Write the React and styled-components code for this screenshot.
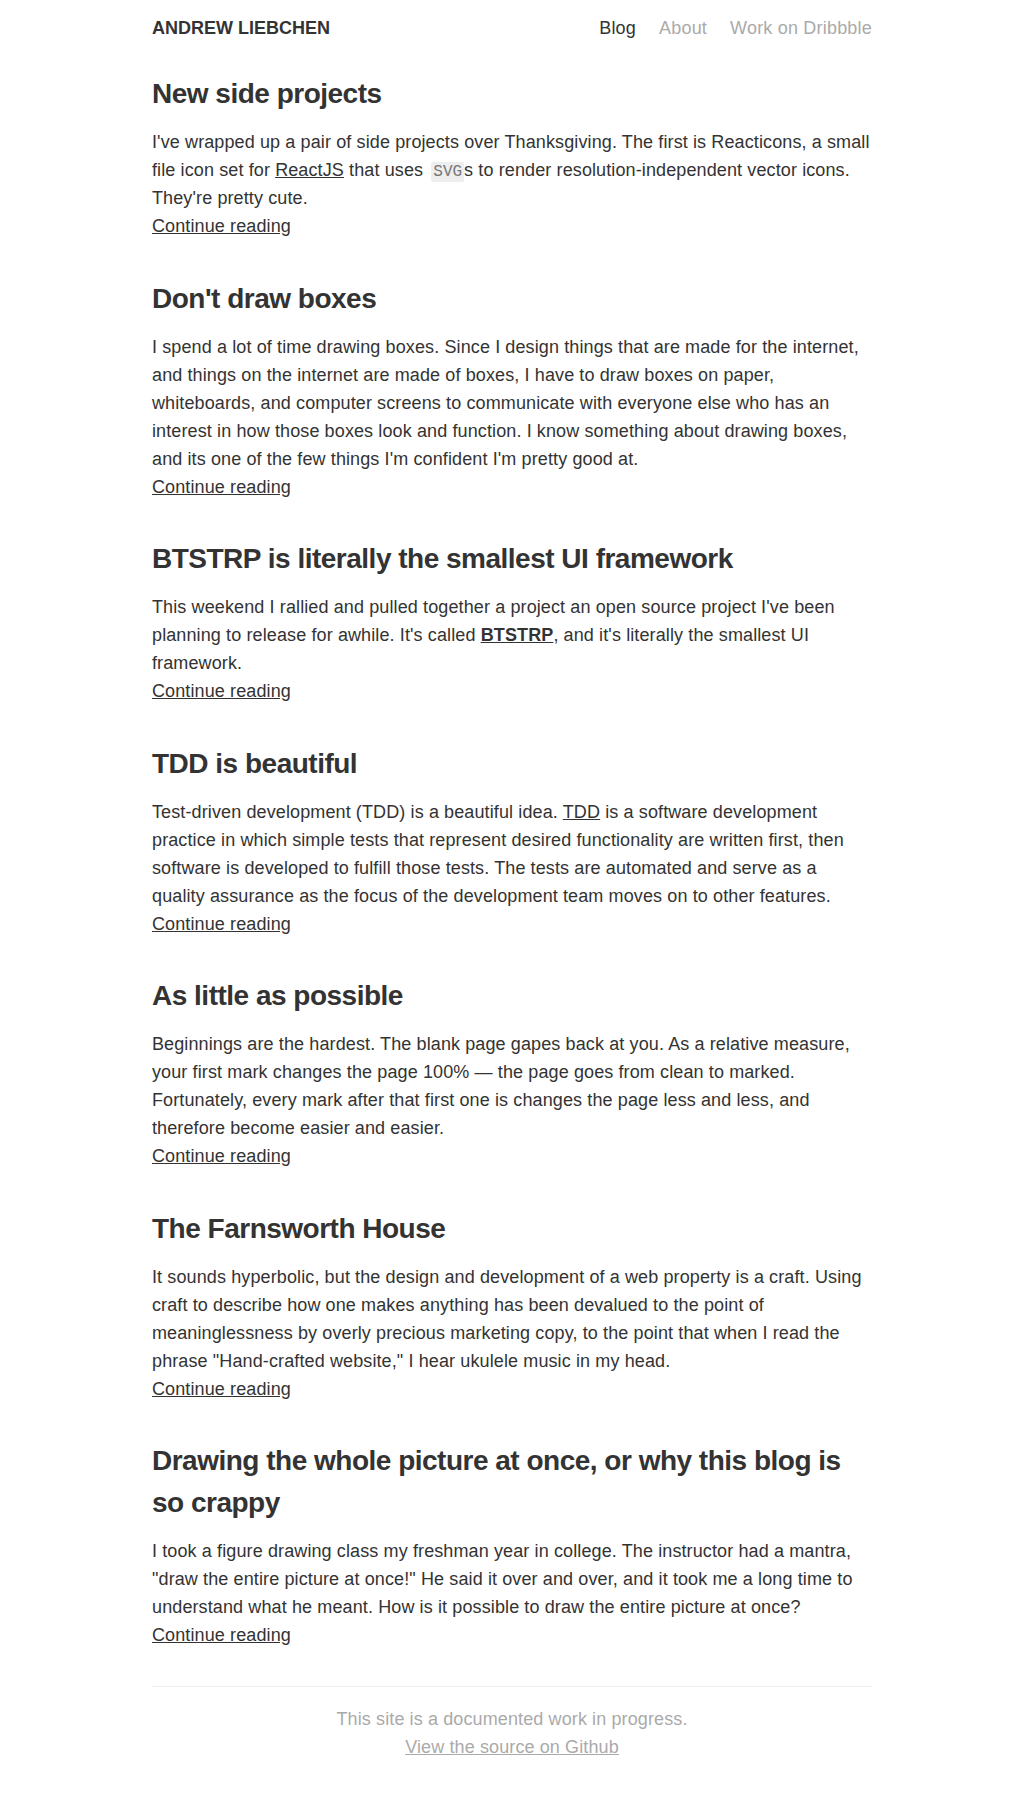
import React from 'react'
import styled, { createGlobalStyle } from 'styled-components'

const GlobalStyle = createGlobalStyle`
    body {
        margin: 0;
        background: #fff;
        color: #333;
        font-family: "Liberation Sans", Arial, Helvetica, sans-serif;
        -webkit-font-smoothing: antialiased;
    }
`

const Page = styled.div`
    width: 720px;
    margin: 0 auto;
    padding: 14px 0 36px;
    letter-spacing: 0.115px;
`

const Header = styled.header`
    display: flex;
    justify-content: space-between;
    align-items: center;
    line-height: 28px;
    margin-bottom: 31px;
`

const Logo = styled.a`
    font-size: 18px;
    font-weight: 700;
    text-transform: uppercase;
    letter-spacing: 0;
    color: #333;
    text-decoration: none;
`

const Nav = styled.nav`
    display: flex;
    gap: 23px;
`

const NavLink = styled.a`
    font-size: 18px;
    letter-spacing: 0.2px;
    color: ${(p) => (p.active ? '#333' : '#aaa')};
    text-decoration: none;
`

const Post = styled.article`
    & + & {
        margin-top: 37.5px;
    }
`

const Title = styled.h2`
    margin: 0 0 13px;
    font-size: 28px;
    line-height: 42px;
    font-weight: 700;
    letter-spacing: -0.5px;
    color: #333;
`

const Excerpt = styled.p`
    margin: 0;
    font-size: 18px;
    line-height: 28px;
`

const Link = styled.a`
    color: #333;
    text-decoration: underline;
    font-weight: ${(p) => (p.bold ? 700 : 400)};
`

const More = styled.a`
    display: block;
    font-size: 18px;
    line-height: 28px;
    color: #333;
    text-decoration: underline;
`

const Code = styled.code`
    font-family: "Liberation Mono", "DejaVu Sans Mono", monospace;
    font-size: 16px;
    line-height: 1;
    letter-spacing: 0;
    color: #777;
    background: #eee;
    padding: 1px 2px;
    border-radius: 2px;
    margin-left: 3px;
`

const Footer = styled.footer`
    margin-top: 37px;
    border-top: 1px solid #eee;
    padding-top: 18px;
    text-align: center;
    font-size: 18px;
    line-height: 28px;
    color: #aaa;
`

const FooterLink = styled.a`
    display: block;
    color: #aaa;
    text-decoration: underline;
`

const posts = [
    {
        title: 'New side projects',
        body: <>I've wrapped up a pair of side projects over Thanksgiving. The first is Reacticons, a small file icon set for <Link href="#">ReactJS</Link> that uses <Code>SVG</Code>s to render resolution-independent vector icons. They're pretty cute.</>,
    },
    {
        title: "Don't draw boxes",
        body: "I spend a lot of time drawing boxes. Since I design things that are made for the internet, and things on the internet are made of boxes, I have to draw boxes on paper, whiteboards, and computer screens to communicate with everyone else who has an interest in how those boxes look and function. I know something about drawing boxes, and its one of the few things I'm confident I'm pretty good at.",
    },
    {
        title: 'BTSTRP is literally the smallest UI framework',
        body: <>This weekend I rallied and pulled together a project an open source project I've been planning to release for awhile. It's called <Link href="#" bold>BTSTRP</Link>, and it's literally the smallest UI framework.</>,
    },
    {
        title: 'TDD is beautiful',
        body: <>Test-driven development (TDD) is a beautiful idea. <Link href="#">TDD</Link> is a software development practice in which simple tests that represent desired functionality are written first, then software is developed to fulfill those tests. The tests are automated and serve as a quality assurance as the focus of the development team moves on to other features.</>,
    },
    {
        title: 'As little as possible',
        body: 'Beginnings are the hardest. The blank page gapes back at you. As a relative measure, your first mark changes the page 100% — the page goes from clean to marked. Fortunately, every mark after that first one is changes the page less and less, and therefore become easier and easier.',
    },
    {
        title: 'The Farnsworth House',
        body: 'It sounds hyperbolic, but the design and development of a web property is a craft. Using craft to describe how one makes anything has been devalued to the point of meaninglessness by overly precious marketing copy, to the point that when I read the phrase "Hand-crafted website," I hear ukulele music in my head.',
    },
    {
        title: 'Drawing the whole picture at once, or why this blog is so crappy',
        body: 'I took a figure drawing class my freshman year in college. The instructor had a mantra, "draw the entire picture at once!" He said it over and over, and it took me a long time to understand what he meant. How is it possible to draw the entire picture at once?',
    },
]

const App = () => {
    return <>
        <GlobalStyle />
        <Page>
            <Header>
                <Logo href="#">Andrew Liebchen</Logo>
                <Nav>
                    <NavLink href="#" active>Blog</NavLink>
                    <NavLink href="#">About</NavLink>
                    <NavLink href="#">Work on Dribbble</NavLink>
                </Nav>
            </Header>

            {posts.map((post) => (
                <Post key={post.title}>
                    <Title>{post.title}</Title>
                    <Excerpt>{post.body}</Excerpt>
                    <More href="#">Continue reading</More>
                </Post>
            ))}

            <Footer>
                This site is a documented work in progress.
                <FooterLink href="#">View the source on Github</FooterLink>
            </Footer>
        </Page>
    </>
}

export default App
